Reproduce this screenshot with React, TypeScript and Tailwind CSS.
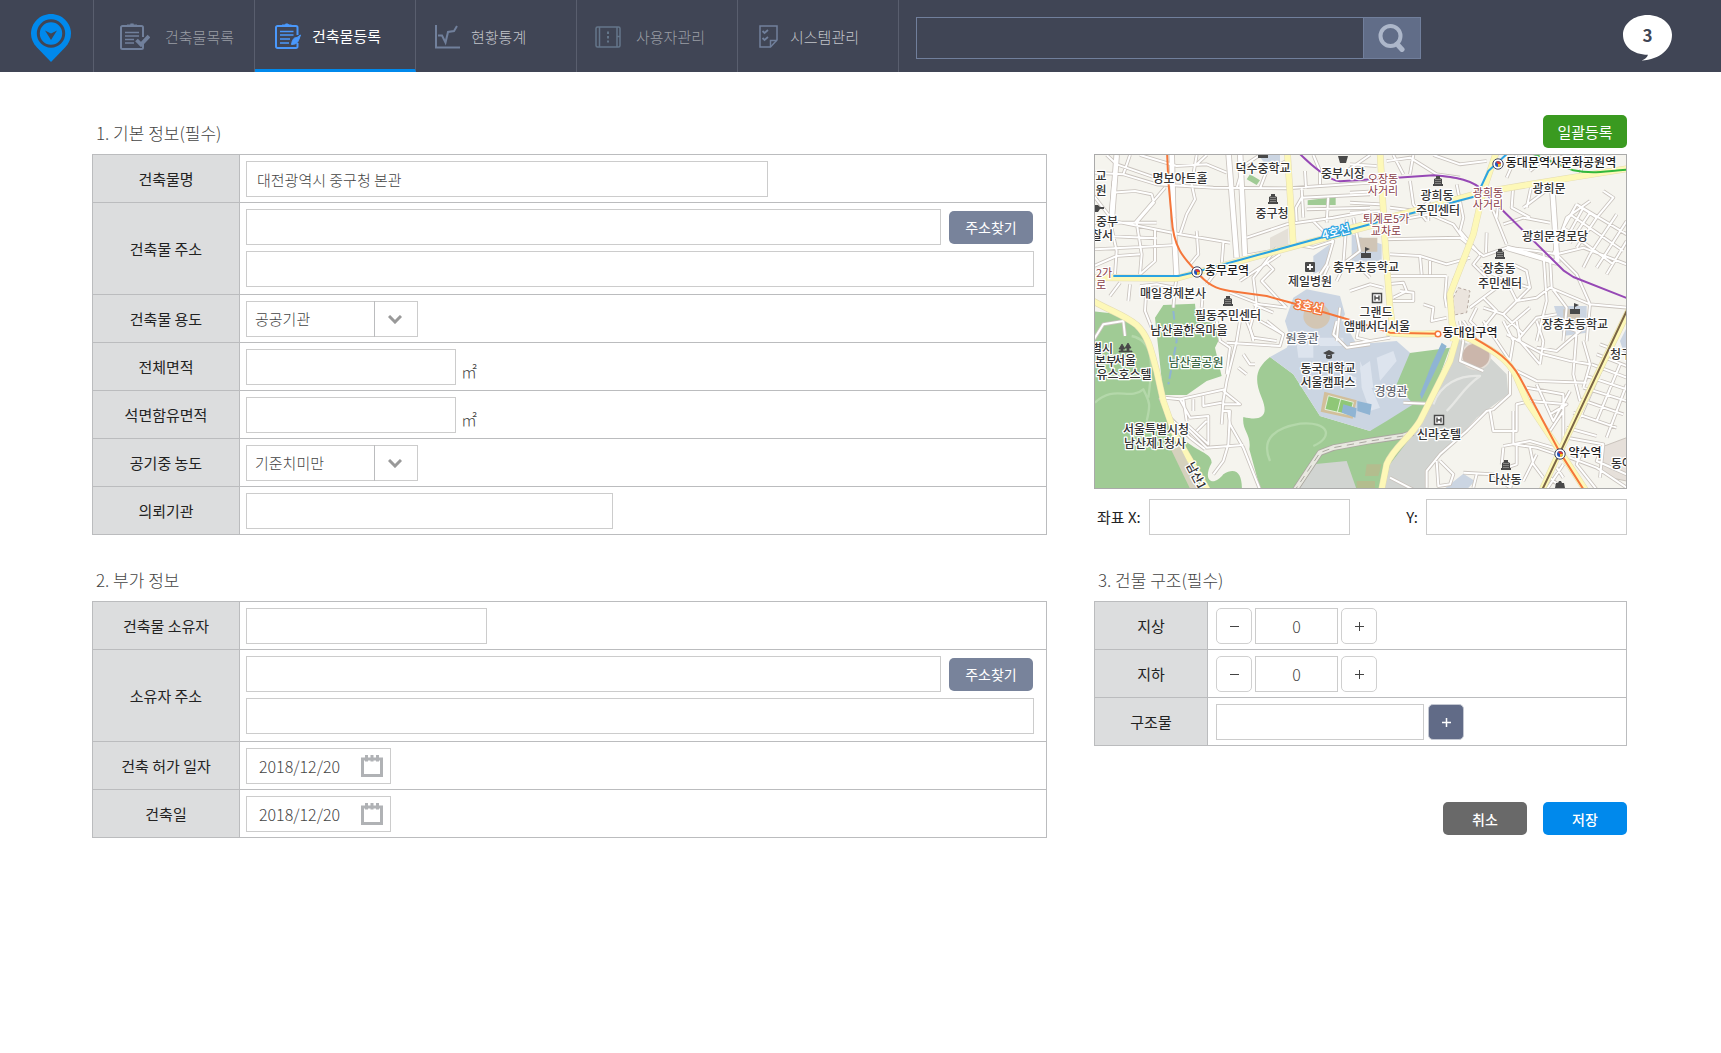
import React, { useState } from "react";

/* ---------- icons ---------- */

function LogoIcon() {
  return (
    <svg width="40" height="48" viewBox="0 0 40 48" aria-hidden="true">
      <path d="M20 0C9 0 0 8.800 0 19.600c0 5.500 2.300 10 6 14L20 48l14-14.400c3.700-4 6-8.500 6-14C40 8.800 31 0 20 0z" fill="#0089ec" />
      <circle cx="20" cy="19.500" r="12.700" fill="none" stroke="#404555" strokeWidth="3" />
      <path d="M14 16.500l6 3 6-3-6 9.500z" fill="#404555" />
    </svg>
  );
}

function ListIcon() {
  return (
    <svg width="30" height="28" viewBox="0 0 30 28" fill="none" stroke="#71809c" aria-hidden="true">
      <path d="M23 20v4.500a1.500 1.500 0 0 1-1.500 1.500h-19A1.500 1.500 0 0 1 1 24.500v-20A1.500 1.500 0 0 1 2.500 3h19A1.500 1.500 0 0 1 23 4.500V14" strokeWidth="2" />
      <path d="M7 3.500V2h2.500C10 .5 14 .5 14.500 2H17v1.500z" fill="#71809c" />
      <path d="M5 9.500h14M5 13h14M5 16.500h9M5 20h9" strokeWidth="1.500" />
      <path d="M16.500 17l4.500 4.500 8-8.500" strokeWidth="3.800" />
    </svg>
  );
}

function RegisterIcon() {
  return (
    <svg width="26" height="27" viewBox="0 0 26 27" fill="none" stroke="#4a98fb" aria-hidden="true">
      <path d="M22.500 20v3.500A1.500 1.500 0 0 1 21 25H2.500A1.500 1.500 0 0 1 1 23.500v-19A1.500 1.500 0 0 1 2.500 3H21a1.500 1.500 0 0 1 1.500 1.500V12" strokeWidth="2" />
      <path d="M7 3.500V2h2.500C10 .5 13.500 .5 14 2h2.500v1.500z" fill="#4a98fb" />
      <path d="M5 8.500h13.500M5 12h13.500M5 16h10M5 20h9" strokeWidth="1.500" />
      <path d="M16.500 21.500c.5-3 1-5 3-6.500l2.500-.5 3.500-2.500-2 5.500c-1 3-4 4-7 4z" fill="#4a98fb" strokeWidth="1" />
    </svg>
  );
}

function ChartIcon() {
  return (
    <svg width="25" height="24" viewBox="0 0 25 24" fill="none" stroke="#71809c" strokeWidth="2" aria-hidden="true">
      <path d="M1 0v22.500h24" />
      <path d="M3 10.500h4l3.500 7L13 7l6-1 3-5" />
    </svg>
  );
}

function UsersIcon() {
  return (
    <svg width="26" height="22" viewBox="0 0 26 22" fill="none" stroke="#64768a" strokeWidth="1.500" aria-hidden="true">
      <rect x="1" y="1" width="24" height="20" rx="1.500" />
      <path d="M4.500 1v20M22 1v20M22 10.500h3" />
      <path d="M13 5.500v2.500M13 10v2.500M13 14.500v2" strokeWidth="2" />
    </svg>
  );
}

function SystemIcon() {
  return (
    <svg width="19" height="23" viewBox="0 0 19 23" fill="none" stroke="#71809c" strokeWidth="1.500" aria-hidden="true">
      <path d="M1 1h17v14l-6.500 7H1z" />
      <path d="M11.500 22v-6.500H18" />
      <path d="M3.500 6l2 2 3.500-3M3.500 13l2 2 3.500-3" strokeWidth="1.800" />
    </svg>
  );
}

function SearchIcon() {
  return (
    <svg width="28" height="28" viewBox="0 0 28 28" fill="none" stroke="#adb7ca" aria-hidden="true">
      <circle cx="12.500" cy="12" r="10" strokeWidth="4" />
      <path d="M19 20l5 5.500" strokeWidth="5" strokeLinecap="round" />
    </svg>
  );
}

function CalendarIcon() {
  return (
    <svg width="22" height="22" viewBox="0 0 22 22" aria-hidden="true">
      <rect x="1.500" y="4" width="19" height="16.500" fill="none" stroke="#b0b2b5" strokeWidth="3" />
      <path d="M5.500 0v6.500M11 0v6.500M16.500 0v6.500" stroke="#b0b2b5" strokeWidth="3" />
    </svg>
  );
}

/* ---------- map ---------- */

// Streets are digitised on four tiles at three units per pixel.
const TILES = {
  nw: "translate(-42 -42)",
  ne: "translate(768 -42)",
  sw: "translate(-42 498)",
  se: "translate(768 498)",
};

const STREETS = [
  {
    tile: TILES.nw,
    d: `M42 95L130 100 230 130 400 140 620 142 870 125M80 42L110 70 240 115M95 155L165 150 215 160 222 185 170 245 185 340 180 400
      M42 165L100 240 225 265 300 280 450 305M255 140L165 245M42 245L230 245M100 120L90 240 110 330 105 400M150 42L130 100
      M42 325L180 318 290 312M80 285L230 292M225 265L225 360 180 400M180 42L290 75 380 70 440 95M350 42L335 130 345 175 320 220 300 280
      M380 42L350 70M42 375L110 345 180 340M290 410L285 440 230 430 180 435M150 430L145 480M200 430L195 510 215 560M285 440L280 500
      M120 425L90 465M370 440L365 500M430 305L425 370 380 430M350 270L355 340 330 370M500 290L620 250 760 230 870 210
      M490 345L630 320M665 142L670 230M700 42L720 90 720 130M870 42L800 90M675 90L678 142M650 240L648 200 665 170 870 160
      M680 205L870 200M745 165L740 245M700 240L760 300 740 370 720 400M640 310L700 320 760 300M800 235L790 370 760 380
      M820 230L840 330 800 360 770 420M590 320L520 410 530 490M560 365L580 385 545 420 600 480 620 500M450 455L540 490 620 500M530 490L510 560 520 600
      M520 490L580 515M480 420L600 340M540 42L490 75 470 142M620 60L560 90 540 142M745 375L720 430M780 500L770 600M830 370L870 410M560 540L610 580`,
  },
  {
    tile: TILES.ne,
    d: `M0 70L80 75M0 155L90 150M0 185L90 190M0 215L100 210M110 60L180 50 260 100 330 110M190 42L180 100M250 42L330 70 410 60M130 42L160 100
      M180 120L190 190 230 240M235 180L235 240M120 200L200 210 240 180M320 130L340 230 330 270 390 340M130 240L240 220 310 250 360 320
      M100 295L330 290 400 345 470 320 560 330 620 340 700 320 830 370M410 275L408 335M430 210L470 310M445 180L440 230M460 250L520 230 600 245
      M490 130L485 200 540 230M545 130L530 200M600 140L520 200M600 42L540 90M650 42L600 60M470 110L500 42M700 42L690 110
      M120 340L210 345 290 370 360 350M210 345L215 400M110 405L290 405M240 360L240 400M110 430L160 425 170 450 130 470M120 480L190 480 190 455 150 450
      M290 405L285 470 290 500M220 490L250 500 245 540 290 530M0 450L60 430 100 440M390 380L470 420 540 440 530 390 490 370
      M390 345L370 370 440 440M470 420L500 480 560 470 600 440 720 490 830 500M580 330L590 480 560 600M600 350L605 440 650 500 640 600
      M540 440L460 520 400 500M440 440L360 500M400 470L440 510 400 560M460 520L520 580M470 560L540 500M500 600L560 530 620 520
      M620 340L680 400 720 490 710 600M760 150L790 170 740 230 680 190M680 190L640 260M700 200L650 290M720 215L660 305M740 230L680 320M830 240L740 380
      M800 220L720 340M830 300L770 400M680 190L830 280M660 220L820 330M640 260L790 370M720 340L700 380M610 340L650 230 720 180
      M350 350L310 420M340 540L380 600M380 500L360 540 400 580`,
  },
  {
    tile: TILES.sw,
    d: `M42 55L70 10 130 0 135 45M480 0L470 60 440 180 430 240 425 310M440 65L600 75 610 40 540 0M410 0L420 60 450 80 440 160M490 100L510 130 525 130
      M475 140L500 160M300 235L435 205M370 225L370 255 425 245M255 230L300 235 330 290 385 285 385 370 320 310M310 235L320 300M340 235L340 270M430 210L480 250 430 250
      M430 270L450 270 445 370 430 420 400 460M445 270L450 310 490 380 540 506M320 320L380 380 490 372M240 230L270 290 330 350 375 385M350 330L380 300
      M500 0L520 50 590 60M770 0L760 40 800 80 870 70M840 0L830 50 870 60`,
  },
  {
    tile: TILES.se,
    d: `M0 70L60 60 120 50M330 0L340 60 330 120 400 150M400 0L440 60 480 120M480 120L490 60 460 0M500 0L510 60 570 130M470 40L580 100 660 120 720 130
      M560 0L580 60 570 130M560 80L620 90 690 30 720 0M590 0L680 30M680 30L670 160 690 240M700 60L720 130 700 200M480 150L480 220 430 265 410 270 350 330 270 400 230 450 230 500
      M420 270L430 330 500 330 500 250 540 240M500 150L560 180 710 185M530 200L640 220 640 380M560 190L610 300 660 210M540 240L650 250 600 280M600 330L640 270
      M490 270L490 370 560 380 620 400M460 380L455 430M460 375L540 360 610 380M500 370L500 430 470 440M540 380L550 430 580 470M560 400L520 480
      M270 420L310 460 300 490 265 495 260 420M340 455L430 460 480 500M380 460L370 500M120 470L190 506M160 245L230 248M480 506L490 460
      M750 70L830 100M740 100L830 135M725 130L830 170M710 165L830 205M700 200L830 240M690 235L820 280M670 275L800 320M650 320L740 345
      M780 85L690 290M810 130L740 300M830 190L770 350M650 350L760 370 740 420 830 460M660 410L740 440 830 500M640 430L590 506M700 380L680 430 740 506
      M760 370L750 470M620 440L640 470M600 470L640 506`,
  },
];

const AVENUES = [
  { tile: TILES.nw, d: "M445 30L470 350M480 30L495 345M275 30L280 230 290 410M110 42L95 240" },
  { tile: TILES.ne, d: "M606 130L622 365M470 320L622 365" },
];

const MAIN_ROADS = [
  { tile: TILES.nw, d: "M30 475C90 510 130 520 170 552 210 590 215 640 230 690L250 780 285 880 390 1060" },
  { tile: TILES.nw, d: "M622 30L640 315M30 410L290 412 350 395 880 252" },
  { tile: TILES.ne, d: "M-20 268L390 155 540 130 850 80M90 30L105 300 120 500 130 570M440 30L400 150 370 280 300 460 310 600" },
  { tile: TILES.se, d: "M305 0L320 50 300 120 210 300 C180 350 130 380 110 430L92 520M110 34C160 44 210 38 265 38M330 40C420 80 480 115 500 170L530 240 630 390 715 520" },
  { tile: TILES.se, d: "M840 -40L630 390 570 520" },
];

type MapLabel = [text: string, x: number, y: number, tone?: "road" | "park" | "sub" | "station"];

const MAP_LABELS: MapLabel[] = [
  ["교", 7, 26], ["원", 7, 40], ["중부", 13, 71], ["찰서", 8, 85],
  ["명보아트홀", 86, 28], ["덕수중학교", 169, 18], ["중부시장", 249, 23], ["중구청", 178, 63],
  ["충무초등학교", 272, 117], ["제일병원", 216, 131], ["매일경제본사", 79, 143], ["필동주민센터", 134, 165],
  ["남산골한옥마을", 95, 180], ["2가", 10, 122, "road"], ["로", 7, 134, "road"],
  ["퇴계로5가", 292, 68, "road"], ["교차로", 292, 80, "road"], ["오장동", 289, 28, "road"], ["사거리", 289, 40, "road"],
  ["광희동", 343, 45], ["주민센터", 344, 60], ["광희동", 394, 42, "road"], ["사거리", 394, 54, "road"],
  ["동대문역사문화공원역", 467, 12, "station"], ["광희문", 455, 38], ["광희문경로당", 461, 86],
  ["장충동", 405, 118], ["주민센터", 406, 133], ["그랜드", 282, 162], ["앰배서더서울", 283, 176],
  ["동대입구역", 376, 182, "station"], ["장충초등학교", 481, 174], ["신라호텔", 345, 284],
  ["경영관", 297, 241, "sub"], ["원흥관", 208, 188, "sub"], ["동국대학교", 234, 218], ["서울캠퍼스", 234, 232],
  ["남산골공원", 102, 212, "park"], ["별시", 8, 198], ["본부", 12, 211], ["서울", 31, 210], ["유스호스텔", 30, 224],
  ["서울특별시청", 62, 279], ["남산제1청사", 61, 293], ["약수역", 491, 302, "station"], ["충무로역", 133, 120, "station"],
  ["다산동", 411, 329], ["청구", 527, 204], ["동아", 528, 313],
];

const LABEL_FILL = { road: "#8a4048", park: "#3f6b4a", sub: "#666b74", station: "#1d1d1d" };

const OFFICES = [[179, 44], [344, 26], [406, 99], [134, 146], [412, 310]];
const HOTELS = [[283, 143], [345, 265]];
const SCHOOLS = [[272, 98], [481, 154]];
const STATIONS = [[103, 117], [404, 9], [466, 299]];

function MapView() {
  return (
    <svg className="block h-full w-full" viewBox="1 0 531 333" preserveAspectRatio="xMidYMid slice" role="img" aria-label="지도">
      <rect width="533" height="335" fill="#f5f4ee" />
      <g transform="scale(.33333)" strokeLinejoin="round">
        {/* parks */}
        <g fill="#a0cb95">
          <path transform={TILES.sw} d="M30 -30L120 -20 180 20 215 90 245 230 280 340 350 520H30z" />
          <path transform={TILES.sw} d="M225 -10L250 -48 345 -52 350 0 440 10 405 80 425 165 380 180 320 222 250 222z" />
          <path transform={TILES.sw} d="M290 330C330 390 395 390 395 425 365 480 400 500 430 460 470 435 490 460 485 520H370z" />
          <path transform={TILES.sw} d="M570 108C530 140 520 170 545 230 570 290 540 300 490 288 485 330 515 340 508 385L545 520H920L1000 380 1110 80 960 100 940 250 870 330 720 285 640 160z" />
          <path transform={TILES.nw} d="M683 178L767 168V192H683zM500 115L510 100 540 118 530 132z" />
        </g>
        <g fill="none" stroke="#b4d8aa" strokeWidth="7">
          <path transform={TILES.sw} d="M45 245C100 190 150 240 190 205 205 240 215 240 200 300M155 45C220 60 220 120 205 230M570 420C540 350 590 320 660 308 750 300 760 350 700 375" />
        </g>
        {/* campus */}
        <g fill="#cbd5e2">
          <path transform={TILES.sw} d="M570 108L620 80 650 20 790 0 830 70 950 60 990 95 950 190 1000 250 920 300 870 330 720 285 640 160z" />
          <path transform={TILES.nw} d="M640 470L680 445 780 465 795 520 760 590 800 620H640L615 540z" />
          <path transform={TILES.ne} d="M5 280L95 310V362H5zM612 495H710V575L640 585z" />
          <path transform={TILES.nw} d="M535 42H600V80L560 75zM700 345L750 310 740 380 700 400z" />
          <path transform={TILES.se} d="M280 506L340 458 375 480 350 506zM810 60L830 20V120z" />
        </g>
        <g fill="#dde4ee">
          <path transform={TILES.sw} d="M650 70H700V110H655zM700 50H790V75H720zM780 150L830 170 820 205 780 190zM840 120L870 190 900 260 870 270 845 200z" />
          <path transform={TILES.se} d="M30 140L60 120 70 200 40 205zM80 110L130 90 140 120 90 180z" />
        </g>
        <ellipse cx="668" cy="483" rx="40" ry="38" fill="#d3c6b4" />
        <path transform={TILES.ne} d="M22 290H82V332H22zM640 505H690V545H640z" fill="#d0c5b6" />
        <path transform={TILES.nw} d="M570 290L625 262V320L570 325z" fill="#e4e0d8" />
        <path transform={TILES.sw} d="M733 212L830 238 818 293 722 272z" fill="#d2bf9b" />
        <path transform={TILES.sw} d="M745 224L820 244 810 282 735 265z" fill="#8fc777" stroke="#e3f0dc" strokeWidth="3" />
        <path transform={TILES.sw} d="M782 234L772 274" stroke="#e3f0dc" strokeWidth="3" />
        <path transform={TILES.se} d="M-20 250L20 262 16 290-25 275zM22 240L65 250 60 282 22 270z" fill="#8fb4d3" />
        <path transform={TILES.se} d="M275 65L290 75 265 130 215 235 210 220 245 130z" fill="#8fb4d3" />
        {/* hotel grounds */}
        <path transform={TILES.se} d="M325 55L400 90 470 160 475 220 380 290 290 390 225 450 230 520H100L120 430 220 300 300 120z" fill="#d1d4d1" />
        <path transform={TILES.sw} d="M635 506L700 430 800 420 830 506z" fill="#d1d4d1" />
        <ellipse transform={TILES.se} cx="378" cy="105" rx="43" ry="40" fill="#cbb6ab" stroke="#e6dfd8" strokeWidth="5" />
        <path transform={TILES.se} d="M250 250C270 190 330 160 390 165 340 200 330 230 290 270" fill="none" stroke="#e6e7e4" strokeWidth="7" />
        <path transform={TILES.se} d="M750 380L830 350V480L780 470 750 440z" fill="#e6e0da" stroke="#c9c2bb" strokeWidth="3" />
        <path transform={TILES.ne} d="M325 440L360 450 350 515 312 522 310 470z" fill="#ebe4dd" stroke="#b5a9a0" strokeWidth="3" strokeDasharray="9 7" />
        <path transform={TILES.se} d="M50 430H95L85 465H45zM20 480H75V506H20z" fill="#b3bd8e" />
        <path transform={TILES.sw} d="M280 -30L290 60 265 190" fill="none" stroke="#8fb4d3" strokeWidth="6" strokeDasharray="26 10" />

        {/* streets */}
        <g fill="none" stroke="#c9c3bd">
          {STREETS.map((s) => <path key={s.tile} transform={s.tile} d={s.d} strokeWidth="11" />)}
          {AVENUES.map((s) => <path key={s.tile} transform={s.tile} d={s.d} strokeWidth="19" />)}
        </g>
        <g fill="none" stroke="#fff">
          {STREETS.map((s) => <path key={s.tile} transform={s.tile} d={s.d} strokeWidth="6" />)}
          {AVENUES.map((s) => <path key={s.tile} transform={s.tile} d={s.d} strokeWidth="14" />)}
        </g>
        <g fill="none">
          <path transform={TILES.sw} d="M640 515L720 395 760 380 870 360 970 345 1000 335" stroke="#aaa7a0" strokeWidth="19" />
          <path transform={TILES.sw} d="M640 515L720 395 760 380 870 360 970 345 1000 335" stroke="#e8e8e0" strokeWidth="14" />
          <path transform={TILES.sw} d="M640 515L720 395 760 380 870 360 970 345" stroke="#aaa7a0" strokeWidth="3" strokeDasharray="22 16" />
        </g>
        <g fill="none" stroke="#e4dcb2" strokeWidth="20">
          {MAIN_ROADS.map((r) => <path key={r.d} transform={r.tile} d={r.d} />)}
        </g>
        <g fill="none" stroke="#fdf8b8" strokeWidth="17">
          {MAIN_ROADS.map((r) => <path key={r.d} transform={r.tile} d={r.d} />)}
        </g>
        <path transform={TILES.sw} d="M285 378L350 512" stroke="#d5d1bd" strokeWidth="28" />

        {/* subway lines */}
        <g fill="none" strokeWidth="6">
          <path transform={TILES.nw} stroke="#2ba3e2" d="M100 405H295L350 392 870 250 1190 165 1225 90 1285 35" />
          <path transform={TILES.nw} stroke="#f5763a" d="M261 30L265 120 275 230C280 320 310 350 350 392 380 430 410 445 450 450L560 465 650 490 820 540 930 575 1075 578" />
          <path transform={TILES.se} stroke="#f5763a" d="M370 50C440 90 480 115 510 170L630 395 710 520" />
          <path transform={TILES.nw} stroke="#9648b5" d="M655 34C700 80 750 118 780 121L950 110 1060 103C1130 108 1180 118 1210 150L1270 210 1450 388 1480 408 1650 475" />
          <path transform={TILES.ne} stroke="#32b83c" d="M540 35L600 60 670 88C730 100 780 90 850 84" />
          <path transform={TILES.se} stroke="#7b6545" d="M830 -30L630 395 570 520" />
        </g>
      </g>

      {/* points of interest */}
      {OFFICES.map(([x, y]) => (
        <g key={`${x}-${y}`}>
          <path d={`M${x - 5} ${y + 5}h10v-2h-1v-5l-2-1v-2h-4v2l-2 1v5h-1z`} fill="#494949" />
          <path d={`M${x - 2} ${y - 2}v5M${x} ${y - 2}v5M${x + 2} ${y - 2}v5`} stroke="#f5f4ee" strokeWidth=".7" strokeDasharray="1 1" />
        </g>
      ))}
      {HOTELS.map(([x, y]) => (
        <g key={`${x}-${y}`}>
          <rect x={x - 4.5} y={y - 4.5} width="9" height="9" fill="#fff" stroke="#494949" strokeWidth="1.500" />
          <path d={`M${x - 2} ${y - 2.5}v5M${x + 2} ${y - 2.5}v5M${x - 2} ${y}h4`} stroke="#494949" strokeWidth="1.400" />
        </g>
      ))}
      {SCHOOLS.map(([x, y]) => (
        <path key={`${x}-${y}`} d={`M${x - 5} ${y + 5}v-5h4v-6l5 2-4 2v2h5v5z`} fill="#494949" />
      ))}
      <rect x="211" y="107" width="10" height="10" rx="1" fill="#494949" />
      <path d="M216 109v6M213 112h6" stroke="#fff" strokeWidth="1.800" />
      <path d="M229 198l6-3 6 3-6 3zM232 200v3q3 2 6 0v-3" fill="#494949" />
      <path d="M28 189l3 5h-6zM34 188l3 5h-6zM27 193h2v3h-2zM33 192h2v4h-2zM25 196h13v1H25z" fill="#494949" stroke="#494949" strokeWidth=".8" />
      <path d="M244 1h10l-2 7h-6zM164 0h10v3h-10zM461 333l1-5h2l1-2h2l1 2h2l1 5zM1 50h3l2 2h4v2H6l-2 3H1z" fill="#494949" />

      {/* stations */}
      {STATIONS.map(([x, y]) => (
        <g key={`${x}-${y}`}>
          <circle cx={x} cy={y} r="5.200" fill="#fff" stroke="#3c4465" strokeWidth="1" />
          <circle cx={x} cy={y} r="3" fill="#2454b8" />
          <path d={`M${x} ${y}v3a3 3 0 0 0 3-3z`} fill="#f2c230" />
          <path d={`M${x} ${y}h3a3 3 0 0 0-5-2z`} fill="#e23b2e" />
        </g>
      ))}
      <circle cx="344" cy="179" r="2.800" fill="#fff" stroke="#f5763a" strokeWidth="1.500" />

      {/* labels */}
      <g fontSize="12" fontWeight="500" textAnchor="middle" stroke="#fff" strokeWidth="2.500" strokeLinejoin="round" paintOrder="stroke">
        {MAP_LABELS.map(([text, x, y, tone]) => (
          <text key={`${text}-${x}-${y}`} x={x} y={y} fontSize={tone === "road" ? 11 : 12} fontWeight={tone === "road" ? 400 : 500} fill={tone ? LABEL_FILL[tone] : "#333"}>
            {text}
          </text>
        ))}
        <text x="242" y="81" fill="#fff" stroke="#2ba3e2" transform="rotate(-14 242 77)">4호선</text>
        <text x="215" y="156" fill="#fff" stroke="#f5763a" transform="rotate(12 215 152)">3호선</text>
        <text x="102" y="325" fill="#333" transform="rotate(62 102 321)">남산1</text>
      </g>
    </svg>
  );
}

/* ---------- form parts ---------- */

const inputClass = "h-9 border border-[#cccccc] bg-white px-[10px] text-[15px] font-light text-[#444444] outline-none focus:border-[#0089ec]";
const stepClass = "flex h-9 w-9 items-center justify-center rounded-[5px] border border-[#d0d0d0] bg-white text-[#444444]";

interface RowProps {
  label: string;
  htmlFor: string;
  narrow?: boolean;
  tall?: boolean;
  children: React.ReactNode;
}

function Row({ label, htmlFor, narrow, tall, children }: RowProps) {
  return (
    <div className={`flex border-b border-[#bbbcbe] ${tall ? "min-h-[92px]" : "min-h-12"}`}>
      <label
        htmlFor={htmlFor}
        className={`flex shrink-0 items-center justify-center border-r border-[#bbbcbe] bg-[#dcddde] text-[15px] leading-5 text-[#222222] ${narrow ? "w-[113px]" : "w-[147px]"}`}
      >
        {label}
      </label>
      <div className={`flex min-w-0 flex-1 flex-col gap-[6px] pt-[6px] pb-[5px] ${narrow ? "pl-2" : "pr-3 pl-[6px]"}`}>
        {children}
      </div>
    </div>
  );
}

function Section({ title, action, children }: { title?: string; action?: React.ReactNode; children: React.ReactNode }) {
  return (
    <section className="min-w-0">
      <div className="flex h-[39px] items-start justify-between">
        {title && <h2 className="pl-1 text-[17px] leading-9 font-light text-[#444444]">{title}</h2>}
        {action}
      </div>
      {children}
    </section>
  );
}

function FormBox({ children }: { children: React.ReactNode }) {
  return <div className="border-x border-t border-[#bbbcbe]">{children}</div>;
}

function AddressFields({ id }: { id: string }) {
  return (
    <>
      <div className="flex items-center gap-2 pr-px">
        <input id={id} type="text" className={`${inputClass} min-w-0 flex-1`} />
        <button type="button" className="h-[33px] w-[84px] rounded-[5px] bg-[#78839b] text-[14px] leading-5 text-white">주소찾기</button>
      </div>
      <input type="text" aria-label="상세 주소" className={`${inputClass} w-full`} />
    </>
  );
}

function AreaField({ id }: { id: string }) {
  return (
    <div className="flex items-center gap-[5px]">
      <input id={id} type="text" className={`${inputClass} w-[210px]`} />
      <span className="pt-2 text-[16px] leading-5 font-light text-[#444444]">㎡</span>
    </div>
  );
}

function SelectField({ id, options }: { id: string; options: string[] }) {
  return (
    <div className="relative h-9 w-[172px]">
      <select id={id} className="h-full w-full appearance-none border border-[#cccccc] bg-white pr-12 pl-2 text-[15px] font-light text-[#444444] outline-none">
        {options.map((o) => <option key={o}>{o}</option>)}
      </select>
      <span className="pointer-events-none absolute inset-y-0 right-0 flex w-11 items-center justify-center border-l border-[#bbbcbe] pr-[3px]">
        <svg width="14" height="9" viewBox="0 0 14 9" fill="none" stroke="#999999" strokeWidth="3" aria-hidden="true">
          <path d="M1 1l6 6 6-6" />
        </svg>
      </span>
    </div>
  );
}

function DateField({ id }: { id: string }) {
  return (
    <div className="flex h-9 w-[145px] items-center border border-[#cccccc] pr-[7px] pl-3">
      <input id={id} type="text" defaultValue="2018/12/20" className="min-w-0 flex-1 text-[16px] font-light text-[#444444] outline-none" />
      <button type="button" aria-label="날짜 선택"><CalendarIcon /></button>
    </div>
  );
}

function Stepper({ id }: { id: string }) {
  const [value, setValue] = useState(0);
  return (
    <div className="flex gap-[3px]">
      <button type="button" aria-label="감소" className={stepClass} onClick={() => setValue(Math.max(0, value - 1))}>
        <svg width="9" height="9" viewBox="0 0 9 9" stroke="currentColor"><path d="M0 4.500h9" /></svg>
      </button>
      <input
        id={id}
        type="text"
        value={value}
        onChange={(e) => setValue(Number(e.target.value) || 0)}
        className="h-9 w-[83px] border border-[#cccccc] text-center text-[16px] font-light text-[#444444] outline-none"
      />
      <button type="button" aria-label="증가" className={stepClass} onClick={() => setValue(value + 1)}>
        <svg width="9" height="9" viewBox="0 0 9 9" stroke="currentColor"><path d="M0 4.500h9M4.500 0v9" /></svg>
      </button>
    </div>
  );
}

/* ---------- page ---------- */

const NAV = [
  { label: "건축물목록", icon: <ListIcon />, className: "gap-[15px] pl-[26px] text-[#9a9da5]" },
  { label: "건축물등록", icon: <RegisterIcon />, className: "gap-[11px] pl-5 text-white", active: true },
  { label: "현황통계", icon: <ChartIcon />, className: "gap-[11px] pl-[19px] text-[#c2c4ca]" },
  { label: "사용자관리", icon: <UsersIcon />, className: "gap-[15px] pl-[18px] text-[#9a9da5]" },
  { label: "시스템관리", icon: <SystemIcon />, className: "gap-3 pl-[21px] text-[#c2c4ca]" },
];

function Header() {
  return (
    <header className="flex h-[72px] items-stretch bg-[#404555]">
      <a href="#" aria-label="홈" className="flex w-[94px] shrink-0 items-center border-r border-[#595e6e] pt-1 pl-[31px]">
        <LogoIcon />
      </a>
      <nav className="flex shrink-0">
        {NAV.map((item) => (
          <a
            key={item.label}
            href="#"
            className={`flex w-[161px] items-center border-r border-[#595e6e] text-[15px] leading-5 ${item.className} ${item.active ? "border-b-[3px] border-b-[#0089ec] pt-[3px] font-normal" : "pt-px font-light"}`}
          >
            {item.icon}
            <span>{item.label}</span>
          </a>
        ))}
      </nav>
      <div className="flex min-w-0 flex-1 items-center justify-between gap-4 pt-1 pr-[49px] pl-[17px]">
        <form className="flex h-[42px] w-[505px] min-w-0 border border-[#717f9c]" onSubmit={(e) => e.preventDefault()}>
          <input type="search" aria-label="검색" className="min-w-0 flex-1 bg-transparent px-3 text-[15px] text-white outline-none" />
          <button type="submit" aria-label="검색" className="flex w-[57px] items-center justify-center border-l border-[#717f9c] bg-[#616d88] pr-px">
            <SearchIcon />
          </button>
        </form>
        <button type="button" aria-label="알림 3건" className="relative h-[46px] w-[49px] shrink-0">
          <svg className="absolute inset-0" width="49" height="46" viewBox="0 0 49 46" aria-hidden="true">
            <path d="M24.500 0C11 0 0 8.800 0 19.800c0 11 9.500 20 25 20-1 2.700-3 4.700-6.500 5.800C37 44.500 49 34 49 19.800 49 8.800 38 0 24.500 0z" fill="#fff" />
          </svg>
          <span className="relative block pb-[6px] text-[17px] leading-5 font-bold text-[#404555]">3</span>
        </button>
      </div>
    </header>
  );
}

export default function App() {
  return (
    <div className="min-h-screen bg-white font-['Noto_Sans_CJK_KR',sans-serif]">
      <Header />
      <main className="grid grid-cols-[minmax(0,955fr)_minmax(0,533fr)] gap-x-[47px] gap-y-[27px] pt-[43px] pr-[94px] pl-[92px]">
        <Section title="1. 기본 정보(필수)">
          <FormBox>
            <Row label="건축물명" htmlFor="name">
              <input id="name" type="text" defaultValue="대전광역시 중구청 본관" className={`${inputClass} w-[522px]`} />
            </Row>
            <Row label="건축물 주소" htmlFor="address" tall>
              <AddressFields id="address" />
            </Row>
            <Row label="건축물 용도" htmlFor="usage">
              <SelectField id="usage" options={["공공기관", "학교", "의료시설"]} />
            </Row>
            <Row label="전체면적" htmlFor="area">
              <AreaField id="area" />
            </Row>
            <Row label="석면함유면적" htmlFor="asbestos">
              <AreaField id="asbestos" />
            </Row>
            <Row label="공기중 농도" htmlFor="density">
              <SelectField id="density" options={["기준치미만", "기준치초과"]} />
            </Row>
            <Row label="의뢰기관" htmlFor="agency">
              <input id="agency" type="text" className={`${inputClass} w-[367px]`} />
            </Row>
          </FormBox>
        </Section>

        <Section
          action={
            <button type="button" className="ml-auto h-[33px] w-[84px] rounded-[5px] bg-[#3a9a20] text-[15px] leading-5 text-white">
              일괄등록
            </button>
          }
        >
          <div className="h-[335px] border border-[#aaaaaa]">
            <MapView />
          </div>
          <div className="mt-[10px] flex justify-between text-[15px] leading-5 text-[#222222]">
            <div className="flex items-center gap-2 pl-[3px]">
              <label htmlFor="coord-x">좌표 X:</label>
              <input id="coord-x" type="text" className={`${inputClass} w-[201px]`} />
            </div>
            <div className="flex items-center gap-2">
              <label htmlFor="coord-y">Y:</label>
              <input id="coord-y" type="text" className={`${inputClass} w-[201px]`} />
            </div>
          </div>
        </Section>

        <Section title="2. 부가 정보">
          <FormBox>
            <Row label="건축물 소유자" htmlFor="owner">
              <input id="owner" type="text" className={`${inputClass} w-[241px]`} />
            </Row>
            <Row label="소유자 주소" htmlFor="owner-address" tall>
              <AddressFields id="owner-address" />
            </Row>
            <Row label="건축 허가 일자" htmlFor="permit-date">
              <DateField id="permit-date" />
            </Row>
            <Row label="건축일" htmlFor="built-date">
              <DateField id="built-date" />
            </Row>
          </FormBox>
        </Section>

        <Section title="3. 건물 구조(필수)">
          <FormBox>
            <Row label="지상" htmlFor="floors-above" narrow>
              <Stepper id="floors-above" />
            </Row>
            <Row label="지하" htmlFor="floors-below" narrow>
              <Stepper id="floors-below" />
            </Row>
            <Row label="구조물" htmlFor="structure" narrow>
              <div className="flex gap-1">
                <input id="structure" type="text" className={`${inputClass} w-[208px]`} />
                <button type="button" aria-label="구조물 추가" className="flex h-9 w-9 items-center justify-center rounded-[5px] border border-[#c4c8d2] bg-[#616b87] text-white">
                  <svg width="9" height="9" viewBox="0 0 9 9" stroke="currentColor" strokeWidth="1.500"><path d="M0 4.500h9M4.500 0v9" /></svg>
                </button>
              </div>
            </Row>
          </FormBox>
          <div className="mt-14 flex justify-end gap-4 text-[14px] leading-5 font-medium text-white">
            <button type="button" className="h-[33px] w-[84px] rounded-[5px] bg-[#696969]">취소</button>
            <button type="button" className="h-[33px] w-[84px] rounded-[5px] bg-[#0089ec]">저장</button>
          </div>
        </Section>
      </main>
    </div>
  );
}
